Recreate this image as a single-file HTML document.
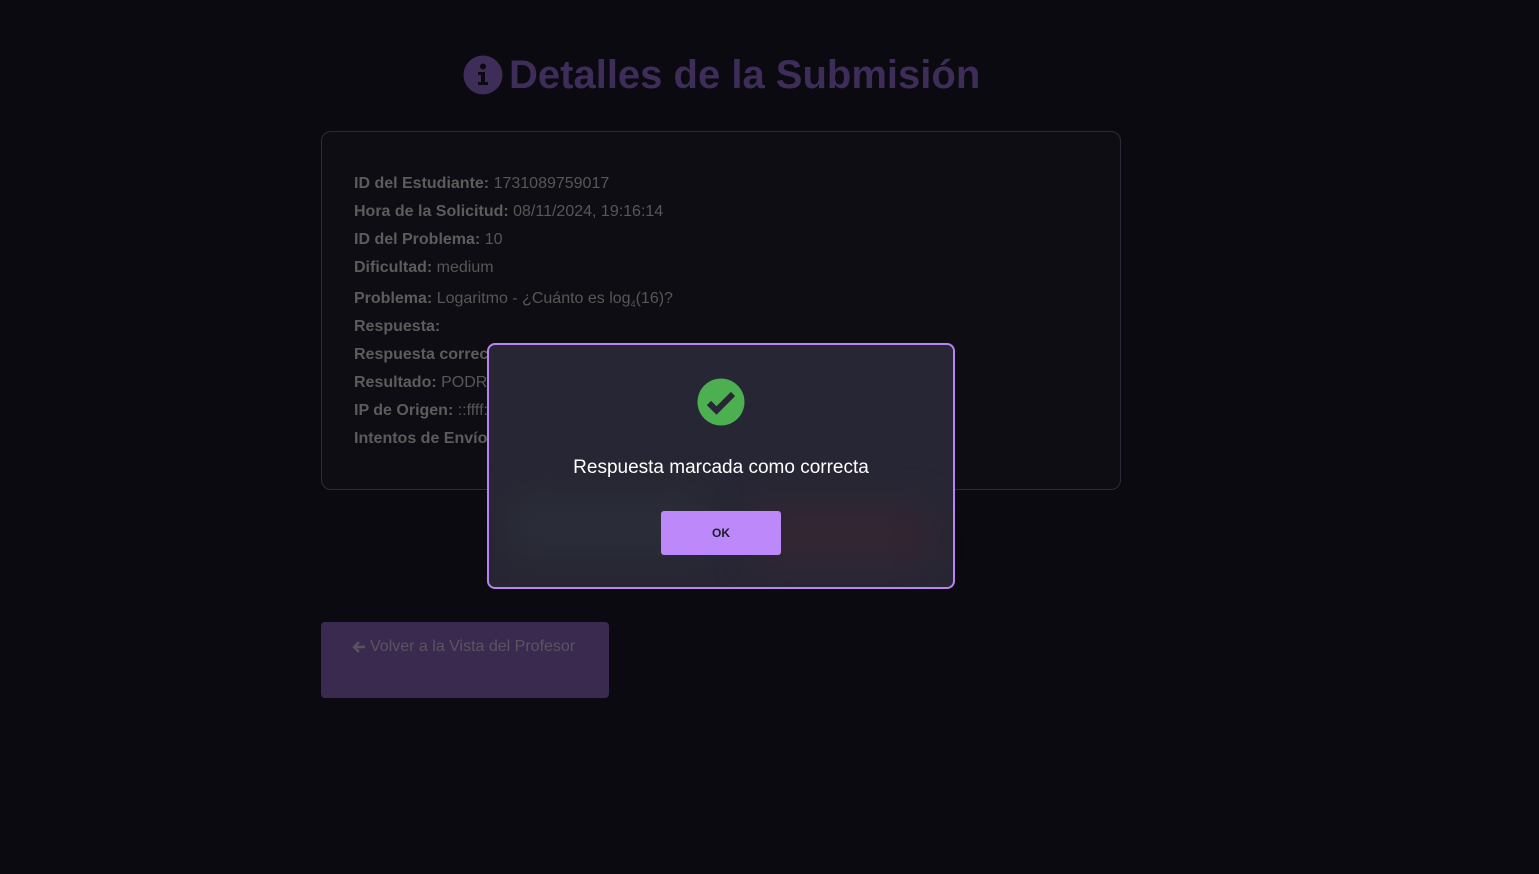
<!DOCTYPE html>
<html><head><meta charset="utf-8"><style>
html,body{margin:0;padding:0;width:1539px;height:874px;background:#0b0a10;overflow:hidden;font-family:"Liberation Sans",Arial,sans-serif;}
.title{position:absolute;left:463px;top:52px;height:46px;display:flex;align-items:center;color:#3d2d58;font-weight:bold;font-size:40px;white-space:nowrap;}
.title svg{margin-right:6px}
.card{position:absolute;left:321px;top:131px;width:798px;height:357px;border:1px solid #2f2a3a;border-radius:10px;background:#0e0d13;}
.row{position:absolute;left:32px;font-size:16px;color:#575757;white-space:nowrap}
.row b{color:#5c5c5c}
.back{position:absolute;left:321px;top:622px;width:288px;height:76px;background:#3a2a4f;border-radius:4px;color:#5a5460;font-size:16px;}
.back span{position:absolute;left:31px;top:16px;display:flex;align-items:center;gap:4px}
.glow1{position:absolute;left:505px;top:522px;width:220px;height:46px;background:#1e2a30;filter:blur(10px);opacity:.8}
.glow2{position:absolute;left:730px;top:522px;width:210px;height:46px;background:#3a2030;filter:blur(10px);opacity:.8}
.modal{position:absolute;left:487px;top:343px;width:464px;height:242px;border:2px solid #b983f0;border-radius:8px;background:#272634;overflow:hidden}
.modal .msg{position:absolute;left:0;right:0;top:112px;text-align:center;color:#fff;font-size:19px}
.ok{position:absolute;left:172px;top:166px;width:120px;height:44px;background:#bd88fa;border-radius:3px;color:#1e1a2a;font-weight:bold;font-size:12px;text-align:center;line-height:44px}
</style></head><body>
<div class="title"><svg width="40" height="40" viewBox="0 0 40 40"><circle cx="20" cy="20" r="19.5" fill="#3d2d58"/><circle cx="20" cy="11.5" r="3" fill="#0b0a10"/><path d="M15 17h7v10h3v3h-10v-3h3v-7h-3z" fill="#0b0a10"/></svg>Detalles de la Submisión</div>
<div class="card">
<div class="row" style="top:43px"><b>ID del Estudiante:</b> 1731089759017</div>
<div class="row" style="top:71px"><b>Hora de la Solicitud:</b> 08/11/2024, 19:16:14</div>
<div class="row" style="top:99px"><b>ID del Problema:</b> 10</div>
<div class="row" style="top:127px"><b>Dificultad:</b> medium</div>
<div class="row" style="top:158px"><b>Problema:</b> Logaritmo - ¿Cuánto es log<sub style="font-size:9px">4</sub>(16)?</div>
<div class="row" style="top:186px"><b>Respuesta:</b></div>
<div class="row" style="top:214px"><b>Respuesta correcta:</b> 4</div>
<div class="row" style="top:242px"><b>Resultado:</b> PODRÍA SER CORRECTA</div>
<div class="row" style="top:270px"><b>IP de Origen:</b> ::ffff:127.0.0.1</div>
<div class="row" style="top:298px"><b>Intentos de Envío:</b> 1</div>
</div>
<div class="glow1"></div><div class="glow2"></div>
<div class="back"><span><svg width="14" height="14" viewBox="0 0 14 14"><path d="M7 2L2 7l5 5M2 7h11" stroke="#5a5460" stroke-width="2.4" fill="none"/></svg>Volver a la Vista del Profesor</span></div>
<div class="modal">
<div style="position:absolute;left:20px;top:150px;width:200px;height:60px;background:#2c3139;filter:blur(18px);opacity:.7"></div>
<div style="position:absolute;left:260px;top:160px;width:180px;height:60px;background:#3a2633;filter:blur(18px);opacity:.7"></div>
<svg style="position:absolute;left:208px;top:33px" width="48" height="48" viewBox="0 0 48 48"><circle cx="24" cy="24" r="23.5" fill="#4caf50"/><path d="M12 25l7.5 7.5L36 16" stroke="#272634" stroke-width="6" fill="none"/></svg>
<div class="msg">Respuesta marcada como correcta</div>
<div class="ok">OK</div>
</div>
</body></html>
